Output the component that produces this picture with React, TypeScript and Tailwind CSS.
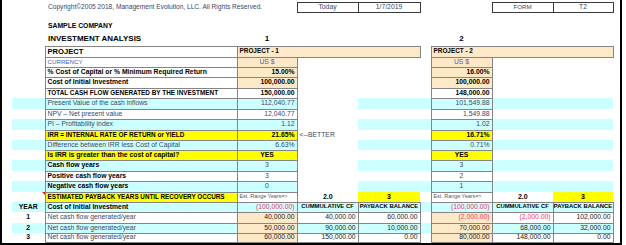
import type { ReactNode } from "react";

const bd = "border border-[#858585]";
const box = "border border-[#3a3a3a]";
const cyan = "bg-[#ccffff]";
const peach = "bg-[#fde9c8]";
const yellow = "bg-[#ffff00]";
const slate = "text-[#384868]";
const red = "text-[#ec3868]";

function Row({ h, band, children }: { h: string; band?: boolean; children?: ReactNode }) {
  return (
    <tr className={`${h} ${band ? cyan : "bg-white"}`}>
      <td className="bg-white" />
      {children}
      <td className="bg-white" />
    </tr>
  );
}

function Label({ children, className = "" }: { children: ReactNode; className?: string }) {
  return <td className={`${bd} overflow-hidden whitespace-nowrap pl-[2px] ${className}`}>{children}</td>;
}

function Num({
  children,
  className = "",
  align = "text-right pr-[2px]",
}: {
  children?: ReactNode;
  className?: string;
  align?: string;
}) {
  return <td className={`${bd} whitespace-nowrap ${align} ${className}`}>{children}</td>;
}

type MetricProps = {
  h: string;
  band?: boolean;
  label: string;
  labelCls?: string;
  v1: string;
  v2: string;
  valCls?: string;
  align?: string;
  note?: string;
};

function Metric({ h, band, label, labelCls = slate, v1, v2, valCls = slate, align, note }: MetricProps) {
  return (
    <Row h={h} band={band}>
      <td />
      <Label className={labelCls}>{label}</Label>
      <Num className={valCls} align={align}>
        {v1}
      </Num>
      <td className={`whitespace-nowrap pl-[2px] bg-white ${slate}`}>{note}</td>
      <td className={note ? "bg-white" : ""} />
      <td />
      <Num className={valCls} align={align}>
        {v2}
      </Num>
      <td />
      <td />
    </Row>
  );
}

function Neg({ children }: { children: ReactNode }) {
  return <span className={red}>{children}</span>;
}

type PaybackProps = {
  h: string;
  band?: boolean;
  year: string;
  p1: ReactNode[];
  p2: ReactNode[];
};

function Payback({ h, band, year, p1, p2 }: PaybackProps) {
  return (
    <Row h={h} band={band}>
      <td className="text-center font-bold">{year}</td>
      <Label className={slate}>Net cash flow generated/year</Label>
      <Num className={`${peach} text-[#222]`}>{p1[0]}</Num>
      <Num className="text-[#222]">{p1[1]}</Num>
      <Num className="text-[#222]">{p1[2]}</Num>
      <td />
      <Num className={`${peach} text-[#222]`}>{p2[0]}</Num>
      <Num className="text-[#222]">{p2[1]}</Num>
      <Num className="text-[#222]">{p2[2]}</Num>
    </Row>
  );
}

export default function App() {
  return (
    <div className="h-[245px] w-[626px] bg-white font-['Liberation_Sans',Arial,sans-serif] text-[6.8px] leading-none text-black">
      <div className="w-[622px] border-x-2 border-b-2 border-black">
        <table className="w-[618px] table-fixed">
          <colgroup>
            <col className="w-[10px]" />
            <col className="w-[33px]" />
            <col className="w-[192px]" />
            <col className="w-[60px]" />
            <col className="w-[61px]" />
            <col className="w-[62px]" />
            <col className="w-[11px]" />
            <col className="w-[61px]" />
            <col className="w-[61px]" />
            <col className="w-[60px]" />
            <col className="w-[7px]" />
          </colgroup>
          <tbody>
            <Row h="h-[2px]" />
            <Row h="h-[10px]">
              <td />
              <td colSpan={2} className={`whitespace-nowrap pl-[3px] text-[6.6px] ${slate}`}>
                Copyright©2005 2018, Management Evolution, LLC. All Rights Reserved.
              </td>
              <td className={`${box} text-center ${slate}`}>Today</td>
              <td className={`${box} text-center ${slate}`}>1/7/2019</td>
              <td />
              <td />
              <td className={`${box} text-center text-[6.2px] ${slate}`}>FORM</td>
              <td className={`${box} text-center ${slate}`}>T2</td>
            </Row>
            <Row h="h-[9px]" />
            <Row h="h-[11px]">
              <td />
              <td className="whitespace-nowrap pl-[3px] text-[6.8px] font-bold">SAMPLE COMPANY</td>
            </Row>
            <Row h="h-[14px]">
              <td />
              <td className="whitespace-nowrap pl-[3px] text-[8px] font-bold">INVESTMENT ANALYSIS</td>
              <td className="text-center text-[8px] font-bold">1</td>
              <td />
              <td />
              <td />
              <td className="text-center text-[8px] font-bold">2</td>
              <td />
              <td />
            </Row>

            <Row h="h-[11px]">
              <td />
              <Label className="text-[7.6px] font-bold">PROJECT</Label>
              <td colSpan={3} className={`${bd} ${peach} pl-[2px] text-[6.4px] font-bold`}>
                PROJECT - 1
              </td>
              <td />
              <td colSpan={3} className={`${bd} ${peach} pl-[2px] text-[6.4px] font-bold`}>
                PROJECT - 2
              </td>
            </Row>
            <Metric
              h="h-[10px]"
              label="CURRENCY"
              labelCls="text-[6.2px] text-[#4a62b2]"
              v1="US $"
              v2="US $"
              valCls={`${peach} text-[#4a62b2]`}
              align="text-center"
            />
            <Metric
              h="h-[10px]"
              label="% Cost of Capital or % Minimum Required Return"
              labelCls="font-bold"
              v1="15.00%"
              v2="16.00%"
              valCls={`${peach} font-bold`}
            />
            <Metric
              h="h-[11px]"
              label="Cost of Initial Investment"
              labelCls="font-bold"
              v1="100,000.00"
              v2="100,000.00"
              valCls={`${peach} font-bold`}
            />
            <Metric
              h="h-[10px]"
              label="TOTAL CASH FLOW GENERATED BY THE INVESTMENT"
              labelCls="text-[6.4px] font-bold bg-white"
              v1="150,000.00"
              v2="148,000.00"
              valCls="font-bold bg-white"
            />
            <Metric h="h-[11px]" band label="Present Value of the cash inflows" v1="112,040.77" v2="101,549.88" />
            <Metric h="h-[10px]" label="NPV – Net present value" v1="12,040.77" v2="1,549.88" />
            <Metric h="h-[11px]" band label="PI – Profitability index" v1="1.12" v2="1.02" />
            <Metric
              h="h-[10px]"
              label="IRR = INTERNAL RATE OF RETURN or YIELD"
              labelCls={`${yellow} text-[6.4px] font-bold`}
              v1="21.65%"
              v2="16.71%"
              valCls={`${yellow} font-bold`}
              note="<--BETTER"
            />
            <Metric h="h-[10px]" band label="Difference between IRR less Cost of Capital" v1="6.63%" v2="0.71%" />
            <Metric
              h="h-[10px]"
              label="Is IRR is greater than the cost of capital?"
              labelCls={`${yellow} font-bold`}
              v1="YES"
              v2="YES"
              valCls={`${yellow} font-bold`}
              align="text-center"
            />
            <Metric h="h-[11px]" band label="Cash flow years" labelCls="font-bold" v1="3" v2="3" align="text-center" />
            <Metric h="h-[10px]" label="Positive cash flow years" labelCls="font-bold" v1="3" v2="2" align="text-center" />
            <Metric h="h-[11px]" band label="Negative cash flow years" labelCls="font-bold" v1="0" v2="1" align="text-center" />

            <Row h="h-[10px]">
              <td className="relative">
                <span className="absolute right-0 top-0 border-l-[3px] border-t-[3px] border-l-transparent border-t-[#e02020]" />
              </td>
              <Label className={`${yellow} text-[6.3px] font-bold`}>ESTIMATED PAYBACK YEARS UNTIL RECOVERY OCCURS</Label>
              <td className={`${bd} whitespace-nowrap pl-[2px] text-[5.4px] text-[#555]`}>Est. Range Years=&gt;</td>
              <td className="text-center text-[7px] font-bold">2.0</td>
              <td className={`${yellow} text-center text-[7px] font-bold`}>3</td>
              <td />
              <td className={`${bd} whitespace-nowrap pl-[2px] text-[5.4px] text-[#555]`}>Est. Range Years=&gt;</td>
              <td className="text-center text-[7px] font-bold">2.0</td>
              <td className={`${yellow} text-center text-[7px] font-bold`}>3</td>
            </Row>
            <Row h="h-[10px]" band>
              <td className="text-center font-bold">YEAR</td>
              <Label className="font-bold">Cost of Initial Investment</Label>
              <Num className={red}>(100,000.00)</Num>
              <Num align="text-center" className="text-[5.9px] font-bold">
                CUMMULATIVE CF
              </Num>
              <Num align="text-center" className="text-[5.9px] font-bold">
                PAYBACK BALANCE
              </Num>
              <td />
              <Num className={red}>(100,000.00)</Num>
              <Num align="text-center" className="text-[5.9px] font-bold">
                CUMMULATIVE CF
              </Num>
              <Num align="text-center" className="text-[5.9px] font-bold">
                PAYBACK BALANCE
              </Num>
            </Row>
            <Payback
              h="h-[11px]"
              year="1"
              p1={["40,000.00", "40,000.00", "60,000.00"]}
              p2={[<Neg key="a">(2,000.00)</Neg>, <Neg key="b">(2,000.00)</Neg>, "102,000.00"]}
            />
            <Payback
              h="h-[10px]"
              band
              year="2"
              p1={["50,000.00", "90,000.00", "10,000.00"]}
              p2={["70,000.00", "68,000.00", "32,000.00"]}
            />
            <Payback
              h="h-[9px]"
              year="3"
              p1={["60,000.00", "150,000.00", "0.00"]}
              p2={["80,000.00", "148,000.00", "0.00"]}
            />
          </tbody>
        </table>
      </div>
    </div>
  );
}
